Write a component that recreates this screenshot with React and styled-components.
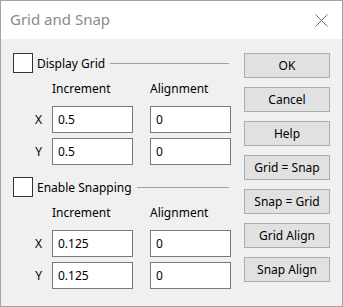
import React from 'react'
import styled, { createGlobalStyle } from 'styled-components'

const GlobalStyle = createGlobalStyle`
  html, body {
    margin: 0;
    padding: 0;
    background: #ffffff;
  }
  * {
    box-sizing: border-box;
  }
`

const Window = styled.div`
  width: 343px;
  height: 307px;
  border: 1px solid #a3a3a3;
  display: flex;
  flex-direction: column;
  font-family: "Noto Sans", "Open Sans", sans-serif;
  font-size: 12px;
  color: #000;
  background: #f0f0f0;
`

const TitleBar = styled.div`
  height: 38px;
  background: #fff;
  display: flex;
  align-items: center;
  justify-content: space-between;
  padding: 0 14px 0 9px;
  flex-shrink: 0;
`

const Title = styled.span`
  font-size: 15px;
  color: #8a8a8a;
  margin-top: -2px;
`

const Body = styled.div`
  flex: 1;
  display: flex;
  padding: 14px 0 0 12px;
  gap: 13px;
`

const LeftCol = styled.div`
  width: 218px;
  display: flex;
  flex-direction: column;
`

const Section = styled.div`
  display: flex;
  flex-direction: column;
  margin-top: ${p => (p.$first ? '0' : '12px')};
`

const Header = styled.div`
  height: 20px;
  display: flex;
  align-items: center;
`

const CheckBox = styled.span`
  width: 20px;
  height: 20px;
  border: 1px solid #333;
  background: #fff;
  flex-shrink: 0;
`

const HeaderText = styled.span`
  margin-left: 4px;
  white-space: nowrap;
`

const Rule = styled.span`
  flex: 1;
  height: 1px;
  background: #a0a0a0;
  margin: 1px 2px 0 5px;
`

const FieldGrid = styled.div`
  display: grid;
  grid-template-columns: 39px 98px 81px;
  row-gap: 5px;
  margin-top: 6px;
`

const ColHead = styled.div`
  height: 18px;
  display: flex;
  align-items: center;
  margin-bottom: 4px;
  grid-column: ${p => p.$col};
`

const AxisLabel = styled.div`
  display: flex;
  align-items: center;
  justify-content: flex-end;
  padding-right: 10px;
`

const Input = styled.div`
  width: 81px;
  height: 27px;
  border: 1px solid #7a7a7a;
  background: #fff;
  display: flex;
  align-items: center;
  padding-left: 5px;
`

const RightCol = styled.div`
  display: flex;
  flex-direction: column;
  gap: 9px;
`

const Button = styled.div`
  width: 86px;
  height: 25px;
  border: 1px solid #adadad;
  background: #e1e1e1;
  display: flex;
  align-items: center;
  justify-content: center;
`

const CloseIcon = () => (
  <svg width="13" height="13" viewBox="0 0 13 13">
    <path d="M0.5 0.5 L12.5 12.5 M12.5 0.5 L0.5 12.5" stroke="#6e6e6e" strokeWidth="1" fill="none" />
  </svg>
)

const FieldSection = ({ title, first, inc, align }) => (
  <Section $first={first}>
    <Header>
      <CheckBox />
      <HeaderText>{title}</HeaderText>
      <Rule />
    </Header>
    <FieldGrid>
      <ColHead $col="2">Increment</ColHead>
      <ColHead $col="3">Alignment</ColHead>
      <AxisLabel>X</AxisLabel>
      <Input>{inc}</Input>
      <Input>{align}</Input>
      <AxisLabel>Y</AxisLabel>
      <Input>{inc}</Input>
      <Input>{align}</Input>
    </FieldGrid>
  </Section>
)

const buttons = ['OK', 'Cancel', 'Help', 'Grid = Snap', 'Snap = Grid', 'Grid Align', 'Snap Align']

const App = () => {
  return (
    <>
      <GlobalStyle />
      <Window>
        <TitleBar>
          <Title>Grid and Snap</Title>
          <CloseIcon />
        </TitleBar>
        <Body>
          <LeftCol>
            <FieldSection first title="Display Grid" inc="0.5" align="0" />
            <FieldSection title="Enable Snapping" inc="0.125" align="0" />
          </LeftCol>
          <RightCol>
            {buttons.map(b => (
              <Button key={b}>{b}</Button>
            ))}
          </RightCol>
        </Body>
      </Window>
    </>
  )
}

export default App
